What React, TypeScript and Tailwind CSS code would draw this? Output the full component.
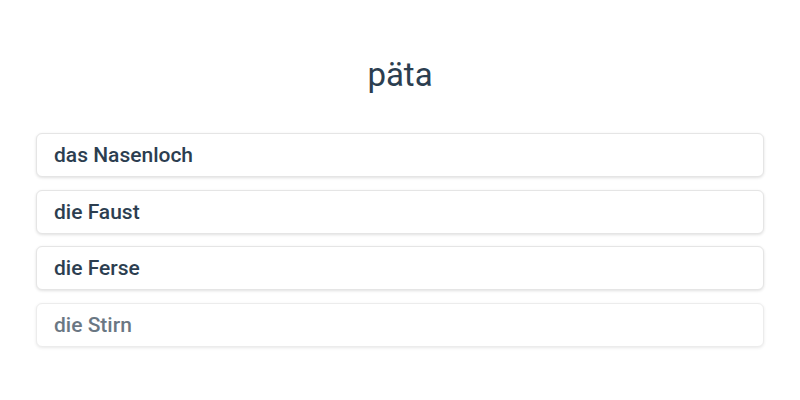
export default function App() {
  const options = ['das Nasenloch', 'die Faust', 'die Ferse', 'die Stirn'];
  return (
    <div className="w-[800px] h-[400px] bg-white font-['Roboto',sans-serif] text-[#2c3e50]">
      <div className="pt-[55px] text-center text-[33px] leading-[40px]">päta</div>
      <div className="mt-[38px] px-9 flex flex-col gap-[12.5px]">
        {options.map((o, i) => (
          <div
            key={o}
            className={`h-[44px] rounded-md border border-[#e5e5e5] bg-white shadow-[0_1px_3px_rgba(0,0,0,0.12)] flex items-center px-[17px] pt-[2px] text-[21px] font-medium ${i === 3 ? 'opacity-70' : ''}`}
          >
            {o}
          </div>
        ))}
      </div>
    </div>
  );
}
